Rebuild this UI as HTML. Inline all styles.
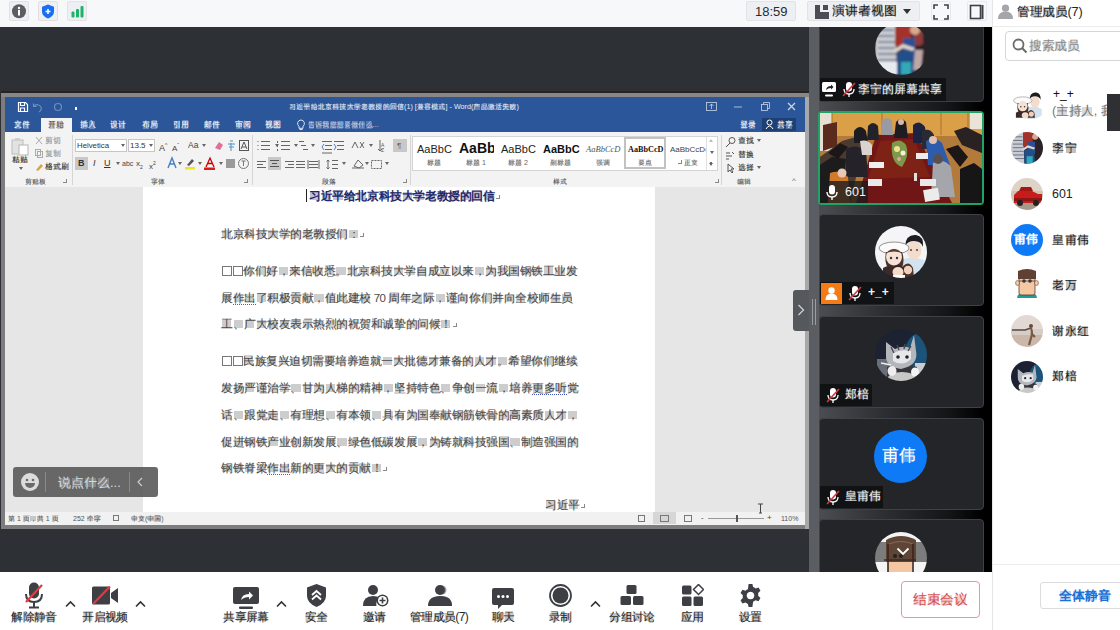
<!DOCTYPE html>
<html><head><meta charset="utf-8">
<style>
*{margin:0;padding:0;box-sizing:border-box}
html,body{width:1120px;height:630px;overflow:hidden;background:#2d3034;font-family:"Liberation Sans",sans-serif}
.a{position:absolute}
.n{white-space:nowrap}
.r8{font-size:8px;line-height:10px;color:#444;white-space:nowrap;position:absolute}
.r7{font-size:7px;line-height:9px;color:#666;white-space:nowrap;position:absolute}
.doc{position:absolute;left:221px;font-size:11.5px;line-height:14px;color:#4a4a4a;white-space:nowrap;letter-spacing:-0.46px}
.tile{position:absolute;left:819px;width:165px;height:92px;background:#232528;border:1px solid #3e4145;border-radius:4px;overflow:hidden}
.lbl{position:absolute;left:0;height:23px;background:#111214;color:#fff;font-size:12px;line-height:23px;white-space:nowrap}
.mem{position:absolute;left:1011px;width:32px;height:32px;border-radius:50%;overflow:hidden}
.mname{position:absolute;left:1052px;font-size:12.4px;line-height:16px;color:#222;white-space:nowrap}
.tb{position:absolute;top:610px;font-size:12px;letter-spacing:-0.6px;line-height:14px;color:#2a2a2a;white-space:nowrap;transform:translateX(-50%)}
.bx{display:inline-block;width:10px;height:10px;border:1px solid #777;margin:0 0.5px 0 0.5px;vertical-align:-1px}
i{font-style:normal}
.c{display:inline-block;position:relative;width:var(--cw,1em);text-align:center;letter-spacing:0;text-indent:0}
.c::before{content:"";position:absolute;left:10%;right:10%;top:18%;height:62%;background:currentColor;opacity:0.28}
.doc{--cw:11.54px}
.tb{--cw:11.4px}
.wv{border-bottom:1px dotted #e03030}
.dd{display:inline-block;width:0;height:0;border-left:2px solid transparent;border-right:2px solid transparent;border-top:3px solid #666;vertical-align:1px;margin:0 1px}
.du{display:inline-block;width:0;height:0;border-left:2px solid transparent;border-right:2px solid transparent;border-bottom:3px solid #bbb;vertical-align:1px}
.dl{display:inline-block;width:0;height:0;border-left:2.5px solid transparent;border-right:2.5px solid transparent;border-top:3px solid #666;vertical-align:0;box-shadow:0 -2px 0 -1px #666}
.dg{display:inline-block;width:4px;height:4px;border-right:1px solid #888;border-bottom:1px solid #888}
.ic{display:inline-block;width:6px;height:6px;border:1px solid #777}
.ret{display:inline-block;width:4px;height:4px;border-right:1px solid #888;border-bottom:1px solid #888;margin-left:1px;vertical-align:1px}
</style></head>
<body>
<div class="a" style="left:0;top:27px;width:809px;height:545px;background:#2d3034"></div>
<!-- WORD WINDOW -->
<div class="a" style="left:1px;top:93px;width:808px;height:436px;background:#7d7d7d"></div>
<div class="a" style="left:1px;top:85px;width:808px;height:2px;background:#2b313b"></div>
<div class="a" style="left:1px;top:87px;width:808px;height:4px;background:#352e2f"></div>
<div class="a" style="left:1px;top:91px;width:808px;height:2px;background:#1e252b"></div>
<div class="a" style="left:1px;top:93px;width:808px;height:4px;background:#8a8684"></div>
<div class="a" style="left:805px;top:97px;width:4px;height:432px;background:#a8a8a8"></div>
<div class="a" style="left:5px;top:97px;width:800px;height:35px;background:#2b579a"></div>
<svg class="a" style="left:17px;top:101px" width="70" height="12" viewBox="0 0 70 12">
 <g fill="none" stroke="#fff" stroke-width="1.2"><path d="M1.5 1.5 h7 l2 2 v7 h-9z"/><path d="M3.5 1.5 v3 h4 v-3"/><path d="M3.5 10.5 v-3.5 h4 v3.5"/></g>
 <g fill="none" stroke="#6f8dbd" stroke-width="1.2"><path d="M17 5 q4 -3 7 1 q1 3 -2 5"/><path d="M16.5 2.5 v3 h3"/><circle cx="41" cy="6" r="3.5"/></g>
 <rect x="58" y="6" width="2" height="3" fill="#fff"/>
</svg>
<div class="a n" style="left:289px;top:102px;color:#e8eef8;font-size:7.2px;line-height:10px"><i class="c">习</i><i class="c">近</i><i class="c">平</i><i class="c">给</i><i class="c">北</i><i class="c">京</i><i class="c">科</i><i class="c">技</i><i class="c">大</i><i class="c">学</i><i class="c">老</i><i class="c">教</i><i class="c">授</i><i class="c">的</i><i class="c">回</i><i class="c">信</i>(1) [<i class="c">兼</i><i class="c">容</i><i class="c">模</i><i class="c">式</i>] - Word(<i class="c">产</i><i class="c">品</i><i class="c">激</i><i class="c">活</i><i class="c">失</i><i class="c">败</i>)</div>
<svg class="a" style="left:701px;top:100px" width="100" height="14" viewBox="0 0 100 14">
 <g fill="none" stroke="#c9d4e6" stroke-width="0.8"><rect x="5.5" y="2.5" width="10" height="8"/><path d="M10.5 4 v5 M8.5 6 l2 -2 2 2"/><path d="M33 7 h8"/><rect x="60.5" y="4.5" width="6" height="6"/><path d="M62.5 4.5 v-2 h6 v6 h-2"/><path d="M87 3 l7 7 M94 3 l-7 7" stroke-width="1.3"/></g>
</svg>
<!-- tabs -->
<div class="a" style="left:41px;top:118px;width:31px;height:14px;background:#f3f3f3"></div>
<div class="a n" style="left:0;top:119px;font-size:8px;line-height:12px;color:#fff">
 <span class="a" style="left:14px"><i class="c">文</i><i class="c">件</i></span>
 <span class="a" style="left:48px;color:#4a4a4a"><i class="c">开</i><i class="c">始</i></span>
 <span class="a" style="left:80px"><i class="c">插</i><i class="c">入</i></span>
 <span class="a" style="left:110px"><i class="c">设</i><i class="c">计</i></span>
 <span class="a" style="left:142px"><i class="c">布</i><i class="c">局</i></span>
 <span class="a" style="left:173px"><i class="c">引</i><i class="c">用</i></span>
 <span class="a" style="left:204px"><i class="c">邮</i><i class="c">件</i></span>
 <span class="a" style="left:235px"><i class="c">审</i><i class="c">阅</i></span>
 <span class="a" style="left:265px"><i class="c">视</i><i class="c">图</i></span>
 <span class="a" style="left:308px;color:#c8d4e8;font-size:7.2px"><i class="c">告</i><i class="c">诉</i><i class="c">我</i><i class="c">您</i><i class="c">想</i><i class="c">要</i><i class="c">做</i><i class="c">什</i><i class="c">么</i>...</span>
 <span class="a" style="left:740px"><i class="c">登</i><i class="c">录</i></span>
</div>
<svg class="a" style="left:296px;top:119px" width="10" height="12" viewBox="0 0 10 12"><path d="M5 1 a3.5 3.5 0 0 1 2 6.3 v2 h-4 v-2 A3.5 3.5 0 0 1 5 1z M3.5 10.5 h3" fill="none" stroke="#dfe6f1" stroke-width="1"/></svg>
<div class="a" style="left:762px;top:118px;width:34px;height:13px;background:#1e3f74"></div>
<svg class="a" style="left:765px;top:119px" width="10" height="11" viewBox="0 0 10 11"><circle cx="4.5" cy="3.5" r="2.5" fill="none" stroke="#fff" stroke-width="1"/><path d="M1 10 q3.5 -6 7 0" fill="none" stroke="#fff" stroke-width="1"/></svg>
<span class="a n" style="left:777px;top:119px;font-size:8px;line-height:12px;color:#fff"><i class="c">共</i><i class="c">享</i></span>
<!-- ribbon -->
<div class="a" style="left:5px;top:132px;width:800px;height:55px;background:#f3f3f3"></div>
<!-- doc area -->
<div class="a" style="left:5px;top:187px;width:800px;height:325px;background:#e6e6e6"></div>
<div class="a" style="left:143px;top:187px;width:512px;height:325px;background:#fff"></div>
<!-- status bar -->
<div class="a" style="left:5px;top:512px;width:800px;height:13px;background:#f1f1f1"></div>
<!-- RIBBON CONTENT -->
<!-- clipboard -->
<svg class="a" style="left:11px;top:137px" width="20" height="19" viewBox="0 0 20 19"><rect x="1" y="3" width="11" height="14" fill="#e2e2e2" stroke="#bdbdbd"/><rect x="4" y="1" width="5" height="3" fill="#cfcfcf"/><rect x="8" y="8" width="9" height="10" fill="#fff" stroke="#b5b5b5"/></svg>
<span class="r8" style="left:12px;top:155px;color:#333"><i class="c">粘</i><i class="c">贴</i></span>
<span class="r7" style="left:18px;top:164px"><i class="dd"></i></span>
<svg class="a" style="left:34px;top:136px" width="10" height="36" viewBox="0 0 10 36"><g fill="none" stroke="#aaa" stroke-width="1"><path d="M2 1 l6 7 M8 1 l-6 7"/><rect x="1.5" y="13.5" width="5" height="6"/><rect x="3.5" y="15.5" width="5" height="6"/></g><path d="M2 34 l5 -6 2 2 -5 5z" fill="#d8a440"/></svg>
<span class="r8" style="left:45px;top:136px;color:#999"><i class="c">剪</i><i class="c">切</i></span>
<span class="r8" style="left:45px;top:149px;color:#999"><i class="c">复</i><i class="c">制</i></span>
<span class="r8" style="left:45px;top:162px;color:#333"><i class="c">格</i><i class="c">式</i><i class="c">刷</i></span>
<span class="r7" style="left:25px;top:177px;color:#555"><i class="c">剪</i><i class="c">贴</i><i class="c">板</i></span>
<span class="r7" style="left:63px;top:177px;color:#888;font-size:6px"><i class="dg"></i></span>
<div class="a" style="left:72px;top:135px;width:1px;height:50px;background:#d6d6d6"></div>
<!-- font group -->
<div class="a" style="left:75px;top:139px;width:52px;height:13px;background:#fff;border:1px solid #c6c6c6"></div>
<span class="r8" style="left:77px;top:141px;color:#333;font-size:7.8px">Helvetica</span>
<span class="r7" style="left:120px;top:141px;color:#555"><i class="dd"></i></span>
<div class="a" style="left:128px;top:139px;width:27px;height:13px;background:#fff;border:1px solid #c6c6c6"></div>
<span class="r8" style="left:130px;top:141px;color:#333;font-size:8px">13.5</span>
<span class="r7" style="left:148px;top:141px;color:#555"><i class="dd"></i></span>
<span class="r8" style="left:159px;top:140px;color:#444;font-size:9px">A<sup style="font-size:5px">^</sup></span>
<span class="r8" style="left:172px;top:140px;color:#444;font-size:8px">A<sup style="font-size:5px">ˇ</sup></span>
<span class="r8" style="left:188px;top:140px;color:#444;font-size:8.5px">Aa <i class="dd"></i></span>
<svg class="a" style="left:213px;top:139px" width="37" height="13" viewBox="0 0 37 13"><path d="M2 9 l4 -6 l4 3 l-3 5z" fill="#e0709a"/><path d="M17 2 h3 M15 5 h7 M16 8 h5 M18 4 v8" stroke="#4a90c8" stroke-width="1" fill="none"/><rect x="26.5" y="1.5" width="9" height="10" fill="none" stroke="#555"/><path d="M28 10 l3 -7 3 7 M29 8 h4" stroke="#555" fill="none"/></svg>
<div class="a" style="left:75px;top:157px;width:13px;height:13px;background:#c8c8c8"></div>
<div class="a n" style="left:78px;top:158px;font-size:9px;line-height:11px;color:#333;font-weight:bold">B</div>
<div class="a n" style="left:93px;top:158px;font-size:9px;line-height:11px;color:#333;font-style:italic">I</div>
<div class="a n" style="left:104px;top:158px;font-size:9px;line-height:11px;color:#333;text-decoration:underline">U</div>
<span class="r7" style="left:115px;top:159px"><i class="dd"></i></span>
<div class="a n" style="left:122px;top:158px;font-size:7px;line-height:11px;color:#444">abc</div>
<div class="a n" style="left:136px;top:158px;font-size:8px;line-height:11px;color:#444">x<sub style="font-size:5px">2</sub></div>
<div class="a n" style="left:149px;top:158px;font-size:8px;line-height:11px;color:#444">x<sup style="font-size:5px">2</sup></div>
<svg class="a" style="left:166px;top:156px" width="84" height="15" viewBox="0 0 84 15"><path d="M2 12 l4 -10 l4 10 M3.5 8 h5" stroke="#4a7fc0" stroke-width="1.4" fill="none"/><path d="M21 9 l5 -6 2 2 -5 5z" fill="#555"/><rect x="19" y="11" width="10" height="2.5" fill="#f5e31a"/><path d="M40 11 l4 -9 l4 9 M41.5 7.5 h5" stroke="#c00" stroke-width="1.3" fill="none"/><rect x="38" y="11.5" width="11" height="2.5" fill="#d51f1f"/><rect x="60" y="3" width="9" height="9" fill="#9a9a9a"/><circle cx="77.5" cy="7.5" r="5" fill="none" stroke="#777"/><path d="M75.5 5 h4 M77.5 5 v5" stroke="#777" fill="none"/></svg>
<span class="r7" style="left:177px;top:159px"><i class="dd"></i></span>
<span class="r7" style="left:197px;top:159px"><i class="dd"></i></span>
<span class="r7" style="left:218px;top:159px"><i class="dd"></i></span>
<span class="r7" style="left:151px;top:177px;color:#555"><i class="c">字</i><i class="c">体</i></span>
<span class="r7" style="left:244px;top:177px;color:#888;font-size:6px"><i class="dg"></i></span>
<div class="a" style="left:252px;top:135px;width:1px;height:50px;background:#d6d6d6"></div>
<!-- paragraph -->
<svg class="a" style="left:256px;top:138px" width="155" height="34" viewBox="0 0 155 34">
 <g stroke="#666" stroke-width="1" fill="none">
  <path d="M5 3.5 h9 M5 7.5 h9 M5 11.5 h9"/><path d="M1.5 3.5 h1 M1.5 7.5 h1 M1.5 11.5 h1"/>
  <path d="M25 3.5 h9 M25 7.5 h9 M25 11.5 h9"/><path d="M21.5 3 v2 M21.5 7 v2 M21.5 11 v2"/>
  <path d="M43 3.5 h5 M45 7.5 h5 M47 11.5 h5"/>
  <path d="M66 3.5 h10 M69 7.5 h7 M69 11.5 h7 M66 15 h10"/><path d="M68 6 l-2 3 2 3" stroke="#4a7fc0"/>
  <path d="M78 3.5 h10 M81 7.5 h7 M81 11.5 h7"/><path d="M78 6 l2 3 -2 3" stroke="#4a7fc0"/>
  <path d="M96 10 l3 -6 l3 6 M104 4 l4 6 M108 4 l-4 6"/>
  <path d="M124 2 v11 M122 11 l2 2 2 -2"/>
  <path d="M1 23.5 h9 M1 26.5 h6 M1 29.5 h9"/>
  <path d="M29 23.5 h9 M32 26.5 h6 M29 29.5 h9"/>
  <path d="M40 23.5 h9 M40 26.5 h9 M40 29.5 h9"/>
  <path d="M53 23.5 h9 M53 26.5 h9 M53 29.5 h9 M52 22 v9 M63 22 v9"/>
  <path d="M76 22.5 h6 M76 26.5 h6 M76 30.5 h6 M72 22 v9 M70.5 23.5 l1.5 -1.5 1.5 1.5 M70.5 29.5 l1.5 1.5 1.5 -1.5"/>
  <path d="M96 30 h12 M98 28 l4 -6 5 5 -4 3z"/>
  <rect x="115.5" y="22.5" width="10" height="8" stroke-dasharray="2 1"/>
 </g>
 <text x="125" y="9" font-size="5" fill="#555" font-family="Liberation Sans">A</text>
 <text x="125" y="14" font-size="5" fill="#555" font-family="Liberation Sans">Z</text>
</svg>
<div class="a" style="left:268px;top:157px;width:13px;height:13px;background:#c8c8c8"></div>
<svg class="a" style="left:270px;top:160px" width="10" height="8"><path d="M0 .5 h9 M2 3.5 h5 M0 6.5 h9" stroke="#555"/></svg>
<div class="a" style="left:393px;top:139px;width:14px;height:13px;background:#c8c8c8"></div>
<div class="a n" style="left:397px;top:140px;font-size:8px;line-height:11px;color:#666">¶</div>
<span class="r7" style="left:274px;top:141px"><i class="dd"></i></span>
<span class="r7" style="left:293px;top:141px"><i class="dd"></i></span>
<span class="r7" style="left:310px;top:141px"><i class="dd"></i></span>
<span class="r7" style="left:368px;top:141px"><i class="dd"></i></span>
<span class="r7" style="left:341px;top:159px"><i class="dd"></i></span>
<span class="r7" style="left:364px;top:159px"><i class="dd"></i></span>
<span class="r7" style="left:384px;top:159px"><i class="dd"></i></span>
<span class="r7" style="left:322px;top:177px;color:#555"><i class="c">段</i><i class="c">落</i></span>
<span class="r7" style="left:403px;top:177px;color:#888;font-size:6px"><i class="dg"></i></span>
<div class="a" style="left:410px;top:135px;width:1px;height:50px;background:#d6d6d6"></div>
<!-- styles -->
<div class="a" style="left:412px;top:136px;width:306px;height:35px;background:#fff;border:1px solid #d4d4d4"></div>
<div class="a" style="left:624px;top:137px;width:42px;height:32px;border:2px solid #c2c2c2"></div>
<div class="a n" style="left:417px;top:143px;font-size:11px;line-height:13px;color:#222">AaBbC</div>
<div class="a n" style="left:459px;top:140px;width:35px;overflow:hidden;font-size:14px;line-height:17px;color:#111;font-weight:bold">AaBb</div>
<div class="a n" style="left:501px;top:143px;font-size:11px;line-height:13px;color:#222">AaBbC</div>
<div class="a n" style="left:543px;top:143px;font-size:11px;line-height:13px;color:#111;font-weight:bold">AaBbC</div>
<div class="a n" style="left:586px;top:144px;font-size:8.5px;line-height:11px;color:#555;font-style:italic;font-family:'Liberation Serif',serif">AaBbCcD</div>
<div class="a n" style="left:628px;top:144px;font-size:8.2px;line-height:11px;color:#111;font-weight:bold;font-family:'Liberation Serif',serif">AaBbCcD</div>
<div class="a n" style="left:670px;top:144px;font-size:8px;line-height:11px;color:#444">AaBbCcDd</div>
<span class="r7" style="left:427px;top:158px;color:#666"><i class="c">标</i><i class="c">题</i></span>
<span class="r7" style="left:466px;top:158px;color:#666"><i class="c">标</i><i class="c">题</i> 1</span>
<span class="r7" style="left:508px;top:158px;color:#666"><i class="c">标</i><i class="c">题</i> 2</span>
<span class="r7" style="left:550px;top:158px;color:#666"><i class="c">副</i><i class="c">标</i><i class="c">题</i></span>
<span class="r7" style="left:596px;top:158px;color:#666"><i class="c">强</i><i class="c">调</i></span>
<span class="r7" style="left:638px;top:158px;color:#666"><i class="c">要</i><i class="c">点</i></span>
<span class="r7" style="left:677px;top:158px;color:#666"><i class="ret"></i> <i class="c">正</i><i class="c">文</i></span>
<div class="a" style="left:706px;top:137px;width:11px;height:33px;background:#fff;border-left:1px solid #e0e0e0"></div>
<span class="r7" style="left:709px;top:137px;color:#bbb;font-size:5px"><i class="du"></i></span>
<span class="r7" style="left:709px;top:149px;color:#555;font-size:5px"><i class="dd"></i></span>
<span class="r7" style="left:709px;top:160px;color:#555;font-size:6px"><i class="dl"></i></span>
<span class="r7" style="left:553px;top:177px;color:#555"><i class="c">样</i><i class="c">式</i></span>
<span class="r7" style="left:715px;top:177px;color:#888;font-size:6px"><i class="dg"></i></span>
<div class="a" style="left:721px;top:135px;width:1px;height:50px;background:#d6d6d6"></div>
<!-- editing -->
<svg class="a" style="left:725px;top:136px" width="12" height="38" viewBox="0 0 12 38"><g fill="none" stroke="#555" stroke-width="1"><circle cx="7" cy="4.5" r="3"/><path d="M5 7 l-4 4"/><path d="M1 17 h4 M1 20 h6 M7 16 l2 2 M1 23 h3"/><path d="M3 28 v8 l2 -2 l2 3 l1 -1 -2 -3 h3z"/></g></svg>
<span class="r8" style="left:738px;top:136px;color:#333"><i class="c">查</i><i class="c">找</i> <span style="font-size:6px;color:#666"><i class="dd"></i></span></span>
<span class="r8" style="left:738px;top:150px;color:#333"><i class="c">替</i><i class="c">换</i></span>
<span class="r8" style="left:738px;top:163px;color:#333"><i class="c">选</i><i class="c">择</i> <span style="font-size:6px;color:#666"><i class="dd"></i></span></span>
<span class="r7" style="left:737px;top:177px;color:#555"><i class="c">编</i><i class="c">辑</i></span>
<span class="r7" style="left:792px;top:176px;color:#666;font-size:8px">^</span>
<!-- DOCUMENT TEXT -->
<div class="a" style="left:306px;top:189px;width:1px;height:13px;background:#222"></div>
<div class="a n" style="left:309px;top:189px;font-size:11.6px;letter-spacing:-0.6px;line-height:14px;color:#1f2a6b;font-weight:bold"><i class="c">习</i><i class="c">近</i><i class="c">平</i><i class="c">给</i><i class="c">北</i><i class="c">京</i><i class="c">科</i><i class="c">技</i><i class="c">大</i><i class="c">学</i><i class="c">老</i><i class="c">教</i><i class="c">授</i><i class="c">的</i><i class="c">回</i><i class="c">信</i><span style="font-weight:normal;color:#888;font-size:7px"><i class="ret"></i></span></div>
<div class="doc" style="top:227px"><i class="c">北</i><i class="c">京</i><i class="c">科</i><i class="c">技</i><i class="c">大</i><i class="c">学</i><i class="c">的</i><i class="c">老</i><i class="c">教</i><i class="c">授</i><i class="c">们</i><i class="c">：</i><span style="color:#777;font-size:7px"><i class="ret"></i></span></div>
<div class="doc" style="top:264px"><span class="bx"></span><span class="bx"></span><i class="c">你</i><i class="c">们</i><i class="c">好</i><i class="c">，</i><i class="c">来</i><i class="c">信</i><i class="c">收</i><i class="c">悉</i><i class="c">。</i><i class="c">北</i><i class="c">京</i><i class="c">科</i><i class="c">技</i><i class="c">大</i><i class="c">学</i><i class="c">自</i><i class="c">成</i><i class="c">立</i><i class="c">以</i><i class="c">来</i><i class="c">，</i><i class="c">为</i><i class="c">我</i><i class="c">国</i><i class="c">钢</i><i class="c">铁</i><i class="c">工</i><i class="c">业</i><i class="c">发</i></div>
<div class="doc" style="top:291px"><i class="c">展</i><span class="wv" style="border-bottom-color:#e03030"><i class="c">作</i><i class="c">出</i></span><i class="c">了</i><i class="c">积</i><i class="c">极</i><i class="c">贡</i><i class="c">献</i><i class="c">，</i><i class="c">值</i><i class="c">此</i><i class="c">建</i><i class="c">校</i> 70 <i class="c">周</i><i class="c">年</i><i class="c">之</i><i class="c">际</i><i class="c">，</i><i class="c">谨</i><i class="c">向</i><i class="c">你</i><i class="c">们</i><i class="c">并</i><i class="c">向</i><i class="c">全</i><i class="c">校</i><i class="c">师</i><i class="c">生</i><i class="c">员</i></div>
<div class="doc" style="top:317px"><i class="c">工</i><i class="c">、</i><i class="c">广</i><i class="c">大</i><i class="c">校</i><i class="c">友</i><i class="c">表</i><i class="c">示</i><i class="c">热</i><i class="c">烈</i><i class="c">的</i><i class="c">祝</i><i class="c">贺</i><i class="c">和</i><i class="c">诚</i><i class="c">挚</i><i class="c">的</i><i class="c">问</i><i class="c">候</i><i class="c">！</i><span style="color:#777;font-size:7px"><i class="ret"></i></span></div>
<div class="doc" style="top:354px"><span class="bx"></span><span class="bx"></span><i class="c">民</i><i class="c">族</i><i class="c">复</i><i class="c">兴</i><i class="c">迫</i><i class="c">切</i><i class="c">需</i><i class="c">要</i><i class="c">培</i><i class="c">养</i><i class="c">造</i><i class="c">就</i><i class="c">一</i><i class="c">大</i><i class="c">批</i><i class="c">德</i><i class="c">才</i><i class="c">兼</i><i class="c">备</i><i class="c">的</i><i class="c">人</i><i class="c">才</i><i class="c">。</i><i class="c">希</i><i class="c">望</i><i class="c">你</i><i class="c">们</i><i class="c">继</i><i class="c">续</i></div>
<div class="doc" style="top:381px"><i class="c">发</i><i class="c">扬</i><i class="c">严</i><i class="c">谨</i><i class="c">治</i><i class="c">学</i><i class="c">、</i><i class="c">甘</i><i class="c">为</i><i class="c">人</i><i class="c">梯</i><i class="c">的</i><i class="c">精</i><i class="c">神</i><i class="c">，</i><i class="c">坚</i><i class="c">持</i><i class="c">特</i><i class="c">色</i><i class="c">、</i><i class="c">争</i><i class="c">创</i><i class="c">一</i><i class="c">流</i><i class="c">，</i><i class="c">培</i><i class="c">养</i><span class="wv" style="border-bottom-color:#4050c0"><i class="c">更</i><i class="c">多</i><i class="c">听</i></span><i class="c">党</i></div>
<div class="doc" style="top:408px"><i class="c">话</i><i class="c">、</i><i class="c">跟</i><i class="c">党</i><i class="c">走</i><i class="c">、</i><i class="c">有</i><i class="c">理</i><i class="c">想</i><i class="c">、</i><i class="c">有</i><i class="c">本</i><i class="c">领</i><i class="c">、</i><i class="c">具</i><i class="c">有</i><i class="c">为</i><i class="c">国</i><i class="c">奉</i><i class="c">献</i><i class="c">钢</i><i class="c">筋</i><i class="c">铁</i><i class="c">骨</i><i class="c">的</i><i class="c">高</i><i class="c">素</i><i class="c">质</i><i class="c">人</i><i class="c">才</i><i class="c">，</i></div>
<div class="doc" style="top:435px"><i class="c">促</i><i class="c">进</i><i class="c">钢</i><i class="c">铁</i><i class="c">产</i><i class="c">业</i><i class="c">创</i><i class="c">新</i><i class="c">发</i><i class="c">展</i><i class="c">、</i><i class="c">绿</i><i class="c">色</i><i class="c">低</i><i class="c">碳</i><i class="c">发</i><i class="c">展</i><i class="c">，</i><i class="c">为</i><i class="c">铸</i><i class="c">就</i><i class="c">科</i><i class="c">技</i><i class="c">强</i><i class="c">国</i><i class="c">、</i><i class="c">制</i><i class="c">造</i><i class="c">强</i><i class="c">国</i><i class="c">的</i></div>
<div class="doc" style="top:461px"><i class="c">钢</i><i class="c">铁</i><i class="c">脊</i><i class="c">梁</i><span class="wv" style="border-bottom-color:#e03030"><i class="c">作</i><i class="c">出</i></span><i class="c">新</i><i class="c">的</i><i class="c">更</i><i class="c">大</i><i class="c">的</i><i class="c">贡</i><i class="c">献</i><i class="c">！</i><span style="color:#777;font-size:7px"><i class="ret"></i></span></div>
<div class="doc" style="top:498px;left:545px"><i class="c">习</i><i class="c">近</i><i class="c">平</i><span style="color:#777;font-size:7px"><i class="ret"></i></span></div>
<!-- status bar text -->
<span class="r7" style="left:8px;top:514px;color:#555"><i class="c">第</i> 1 <i class="c">页</i><i class="c">，</i><i class="c">共</i> 1 <i class="c">页</i></span>
<span class="r7" style="left:73px;top:514px;color:#555">252 <i class="c">个</i><i class="c">字</i></span>
<span class="r7" style="left:113px;top:514px;color:#555"><i class="ic"></i></span>
<span class="r7" style="left:131px;top:514px;color:#555"><i class="c">中</i><i class="c">文</i>(<i class="c">中</i><i class="c">国</i>)</span>
<div class="a" style="left:653px;top:512px;width:23px;height:12px;background:#d6d6d6"></div>
<svg class="a" style="left:636px;top:514px" width="60" height="9" viewBox="0 0 60 9"><g fill="none" stroke="#777"><rect x="2.5" y="1.5" width="6" height="6"/><rect x="24.5" y="1.5" width="8" height="6"/><rect x="48.5" y="1.5" width="7" height="6"/></g></svg>
<div class="a" style="left:708px;top:518px;width:56px;height:1px;background:#999"></div>
<div class="a" style="left:736px;top:515px;width:2px;height:7px;background:#555"></div>
<span class="r7" style="left:701px;top:513px;color:#444;font-size:8px">-</span>
<span class="r7" style="left:767px;top:513px;color:#444;font-size:8px">+</span>
<span class="r7" style="left:781px;top:514px;color:#555">110%</span>
<!-- I-beam cursor -->
<svg class="a" style="left:757px;top:503px" width="7" height="11" viewBox="0 0 7 11"><path d="M1 1 h5 M3.5 1 v9 M2 10 h3" stroke="#444" stroke-width="1" fill="none"/></svg>
<!-- chat overlay -->
<div class="a" style="left:13px;top:467px;width:145px;height:30px;background:rgba(80,80,80,0.85);border-radius:3px"></div>
<svg class="a" style="left:20px;top:472px" width="20" height="20" viewBox="0 0 20 20"><circle cx="10" cy="10" r="9" fill="#dcdcdc"/><circle cx="7" cy="8" r="1.3" fill="#6a6a6a"/><circle cx="13" cy="8" r="1.3" fill="#6a6a6a"/><path d="M5 11 h10 a5 5 0 0 1 -10 0z" fill="#6a6a6a"/></svg>
<div class="a" style="left:45px;top:472px;width:1px;height:20px;background:#8a8a8a"></div>
<div class="a n" style="left:58px;top:475px;font-size:13px;line-height:15px;color:#d8d8d8"><i class="c">说</i><i class="c">点</i><i class="c">什</i><i class="c">么</i>...</div>
<div class="a" style="left:129px;top:472px;width:1px;height:20px;background:#8a8a8a"></div>
<svg class="a" style="left:136px;top:477px" width="8" height="10" viewBox="0 0 8 10"><path d="M6 1 l-4 4 4 4" stroke="#ccc" stroke-width="1.2" fill="none"/></svg>
<!-- VIDEO PANEL -->
<div class="a" style="left:809px;top:27px;width:10px;height:545px;background:#5a5d61"></div>
<div class="a" style="left:819px;top:27px;width:173px;height:545px;background:linear-gradient(90deg,#4a4d51 0%,#2e3034 35%,#141517 75%,#000 94%)"></div>
<div class="a" style="left:983px;top:27px;width:9px;height:545px;background:#000"></div>
<div class="a" style="left:812px;top:299px;width:1px;height:26px;background:#9a9da1"></div>
<div class="a" style="left:815px;top:299px;width:1px;height:26px;background:#9a9da1"></div>
<div class="a" style="left:793px;top:290px;width:16px;height:41px;background:#55585c;border-radius:3px 0 0 3px"></div>
<svg class="a" style="left:797px;top:304px" width="8" height="12" viewBox="0 0 8 12"><path d="M1.5 1 l5 5 -5 5" stroke="#d0d0d0" stroke-width="1.3" fill="none"/></svg>

<!-- tile1 -->
<div class="tile" style="top:9px;height:93px;border-color:#3a3d41"></div>
<div class="a" style="left:819px;top:27px;width:165px;height:1px;background:#232528"></div>
<svg class="a" style="left:875px;top:22px" width="53" height="53" viewBox="0 0 53 53">
 <defs><clipPath id="c1"><circle cx="26.5" cy="26.5" r="26.5"/></clipPath><filter id="bl1"><feGaussianBlur stdDeviation="0.8"/></filter></defs>
 <g clip-path="url(#c1)"><g filter="url(#bl1)">
  <rect width="53" height="53" fill="#3b2f3a"/>
  <path d="M0 0 h20 l2 53 h-22z" fill="#c9ccd3"/>
  <path d="M3 8 h16 M3 14 h16 M3 20 h17 M3 26 h17 M3 32 h18 M3 38 h18 M3 44 h19" stroke="#6a7080" stroke-width="1.6"/>
  <path d="M4 40 h18 v13 h-18z" fill="#e8ecf0"/>
  <path d="M20 0 h20 v24 h-20z" fill="#a3302c"/>
  <path d="M36 0 h17 v53 h-17z" fill="#2a2228"/>
  <path d="M38 6 q6 -4 10 2 v14 q-6 4 -10 0z" fill="#8a3a3a"/>
  <circle cx="40" cy="8" r="5" fill="#d9a88e"/>
  <path d="M28 16 h12 v20 h-12z" fill="#2e4f92"/>
  <path d="M18 28 l10 -6 l12 4 l-2 3 l-10 -3 l-8 5z" fill="#e0d4cc"/>
  <path d="M22 30 h16 l2 23 h-18z" fill="#23508a"/>
  <path d="M26 40 h10 v13 h-10z" fill="#30a8b8"/>
  <path d="M40 28 h8 l-2 20 h-8z" fill="#bda8a8"/>
 </g></g>
</svg>
<div class="a" style="left:820px;top:78px;width:126px;height:23px;background:#111214"></div>
<svg class="a" style="left:822px;top:82px" width="14" height="15" viewBox="0 0 14 15"><rect x="0" y="0" width="14" height="10" rx="1.5" fill="#fff"/><path d="M4 8 q0.5 -4 5 -4 v-1.5 l2.5 2.5 -2.5 2.5 v-1.5 q-3 0 -5 2z" fill="#222"/><rect x="3" y="12.5" width="8" height="2" rx="1" fill="#fff"/></svg>
<svg class="a" style="left:842px;top:82px" width="14" height="15" viewBox="0 0 14 15"><rect x="4" y="0" width="6" height="9.5" rx="3" fill="#fff"/><path d="M2 7 q0 5 5 5 q5 0 5 -5" stroke="#fff" stroke-width="1.3" fill="none"/><path d="M7 12 v3" stroke="#fff" stroke-width="1.3"/><path d="M1 14 l12 -13" stroke="#d9363e" stroke-width="1.6"/></svg>
<div class="a n" style="left:858px;top:82px;font-size:12px;line-height:15px;color:#f2f2f2"><i class="c">李</i><i class="c">宁</i><i class="c">的</i><i class="c">屏</i><i class="c">幕</i><i class="c">共</i><i class="c">享</i></div>

<!-- tile2 conference -->
<div class="a" style="left:818px;top:111px;width:166px;height:94px;border:2px solid #21a366;border-radius:4px;background:#111"></div>
<svg class="a" style="left:820px;top:113px" width="162" height="90" viewBox="0 0 162 90">
 <defs><filter id="bl2"><feGaussianBlur stdDeviation="0.6"/></filter></defs>
 <g filter="url(#bl2)">
 <rect width="162" height="90" fill="#b27a3a"/>
 <rect x="0" y="0" width="162" height="23" fill="#dba047"/>
 <rect x="0" y="0" width="12" height="38" fill="#e6dfd3"/>
 <rect x="150" y="0" width="12" height="16" fill="#e9e3d8"/>
 <path d="M12 0 v23 M62 0 v20 M121 0 v22 M148 0 v16" stroke="#a8722c" stroke-width="1"/>
 <path d="M3 12 l14 -3 v24 l-14 5z" fill="#5a2a1e"/>
 <path d="M0 44 L22 28 L36 24 L44 30 L30 90 H0z" fill="#4a3a30"/>
 <path d="M0 52 L12 44 L26 46 L20 90 H0z" fill="#1c1a1a"/>
 <path d="M8 40 l12 -10 l8 4 l-10 12z" fill="#1a1818"/>
 <path d="M134 18 l12 -4 l16 8 v18 l-20 -8z" fill="#2a2220"/>
 <path d="M126 36 l12 -4 l10 12 l-8 10z" fill="#1a1616"/>
 <path d="M140 56 l14 -6 l8 6 v34 h-22z" fill="#141212"/>
 <path d="M56 22 L96 20 L132 90 H36z" fill="#711812"/>
 <path d="M60 28 L94 26 L110 64 L48 66z" fill="#7e2018"/>
 <path d="M34 18 q6 -8 12 0 l2 12 h-14z" fill="#1e1d22"/>
 <path d="M48 13 q5 -6 10 0 l1 14 h-12z" fill="#24232a"/>
 <path d="M62 8 q5 -6 10 0 l1 14 h-12z" fill="#9a9aa4"/>
 <path d="M76 9 q5 -6 10 0 l2 16 h-14z" fill="#1f1e24"/>
 <circle cx="81" cy="9" r="3" fill="#d8b8a8"/>
 <path d="M93 12 q6 -6 12 2 l2 16 h-14z" fill="#1c2440"/>
 <path d="M102 18 q8 -4 12 4 l0 14 h-12z" fill="#2a2a34"/>
 <path d="M106 28 q8 -6 16 2 l8 22 h-22z" fill="#2d5cac"/>
 <circle cx="113" cy="27" r="4" fill="#e0c0b0"/>
 <path d="M113 50 q10 -6 18 4 l4 30 h-24z" fill="#a4a6ac"/>
 <circle cx="118" cy="46" r="5" fill="#5a5050"/>
 <path d="M26 36 q10 -6 20 2 l2 26 h-22z" fill="#25242a"/>
 <path d="M40 28 q8 -2 12 4 l0 10 h-10z" fill="#d9d4d0"/>
 <path d="M10 60 q10 -4 18 4 l2 26 h-22z" fill="#d07a2a"/>
 <circle cx="22" cy="60" r="4.5" fill="#eac8b4"/>
 <path d="M72 30 q8 -6 14 2 q4 10 -4 22 q-12 -4 -10 -24z" fill="#7b9a48"/>
 <circle cx="77" cy="36" r="3" fill="#f0e490"/><circle cx="83" cy="40" r="2.5" fill="#f4f0e0"/><circle cx="79" cy="46" r="2" fill="#e8a0a0"/>
 <rect x="49" y="49" width="15" height="6" fill="#f0f0f0"/>
 <rect x="96" y="40" width="12" height="6" fill="#ececec"/>
 <rect x="100" y="66" width="16" height="7" fill="#e8e8e8"/>
 <rect x="104" y="76" width="15" height="12" fill="#ececec" transform="rotate(-10 111 82)"/>
 <rect x="48" y="66" width="14" height="7" fill="#eaeaea"/>
 <rect x="94" y="60" width="3" height="8" fill="#e0e0e0"/>
 </g>
 <rect x="0" y="68" width="48" height="22" fill="rgba(28,28,30,0.8)"/>
</svg>
<svg class="a" style="left:826px;top:185px" width="12" height="15" viewBox="0 0 12 15"><rect x="3" y="0" width="6" height="9.5" rx="3" fill="#fff"/><path d="M1 7 q0 5 5 5 q5 0 5 -5" stroke="#fff" stroke-width="1.4" fill="none"/><path d="M6 12 v3" stroke="#fff" stroke-width="1.4"/></svg>
<div class="a n" style="left:845px;top:185px;font-size:12.5px;line-height:15px;color:#f4f4f4">601</div>

<!-- tile3 -->
<div class="tile" style="top:214px"></div>
<svg class="a" style="left:875px;top:226px" width="52" height="52" viewBox="0 0 52 52">
 <defs><clipPath id="c3"><circle cx="26" cy="26" r="26"/></clipPath><filter id="bl3"><feGaussianBlur stdDeviation="0.5"/></filter></defs>
 <g clip-path="url(#c3)"><g filter="url(#bl3)">
  <rect width="52" height="52" fill="#f5f5f7"/>
  <path d="M26 34 q13 -6 26 2 v16 h-26z" fill="#d2e2ee"/>
  <ellipse cx="39" cy="24" rx="7.5" ry="9.5" fill="#f3dccb"/>
  <path d="M30 20 q1 -12 11 -11 q8 1 7 12 q-2 -6 -9 -6 q-6 0 -9 5z" fill="#1e1e22"/>
  <circle cx="36" cy="24" r="0.9" fill="#333"/><circle cx="42" cy="24" r="0.9" fill="#333"/>
  <ellipse cx="19" cy="22" rx="15" ry="6" fill="#fbfbfb" stroke="#777" stroke-width="0.8"/>
  <path d="M11 26 q-2 10 2 16 h14 q3 -8 0 -16z" fill="#4a3028"/>
  <ellipse cx="19" cy="31" rx="8" ry="8.5" fill="#f6e2d5"/>
  <path d="M11 27 q8 -8 16 0 q-8 -3 -16 0z" fill="#5a3a30"/>
  <circle cx="16" cy="32" r="1.2" fill="#333"/><circle cx="22" cy="32" r="1.2" fill="#333"/>
  <path d="M8 42 q6 -4 12 0 v10 h-12z" fill="#3a2a2a"/>
  <path d="M28 40 q6 -6 10 2 l1 10 h-12z" fill="#4e3028"/>
  <circle cx="33" cy="44" r="4.2" fill="#f0d0bc"/>
  <path d="M17 42 q6 -6 12 0 v4 h-12z" fill="#3a2420"/>
  <ellipse cx="23" cy="46" rx="5.5" ry="5" fill="#f4dccb"/>
  <path d="M18 52 h12 v-3 h-12z" fill="#fff"/>
 </g></g>
</svg>
<div class="a" style="left:820px;top:282px;width:74px;height:22px;background:#111214"></div>
<div class="a" style="left:821px;top:283px;width:21px;height:21px;background:#f57c14"></div>
<svg class="a" style="left:824px;top:286px" width="15" height="15" viewBox="0 0 15 15"><circle cx="7.5" cy="4.5" r="3.2" fill="#fff"/><path d="M1.5 14 q0 -6.5 6 -6.5 q6 0 6 6.5z" fill="#fff"/></svg>
<svg class="a" style="left:848px;top:286px" width="14" height="15" viewBox="0 0 14 15"><rect x="4" y="0" width="6" height="9.5" rx="3" fill="#fff"/><path d="M2 7 q0 5 5 5 q5 0 5 -5" stroke="#fff" stroke-width="1.3" fill="none"/><path d="M7 12 v3" stroke="#fff" stroke-width="1.3"/><path d="M1 14 l12 -13" stroke="#d9363e" stroke-width="1.6"/></svg>
<div class="a n" style="left:868px;top:285px;font-size:12px;line-height:15px;color:#f2f2f2;font-weight:bold">+_+</div>

<!-- tile4 -->
<div class="tile" style="top:316px"></div>
<svg class="a" style="left:875px;top:329px" width="52" height="52" viewBox="0 0 52 52">
 <defs><clipPath id="c4"><circle cx="26" cy="26" r="26"/></clipPath><filter id="bl4"><feGaussianBlur stdDeviation="0.7"/></filter></defs>
 <g clip-path="url(#c4)"><g filter="url(#bl4)">
  <rect width="52" height="52" fill="#1d2330"/>
  <ellipse cx="46" cy="24" rx="16" ry="20" fill="#1c5378"/>
  <path d="M40 34 h12 v12 h-12z" fill="#c9cdd2"/>
  <path d="M2 30 h14 v20 h-14z" fill="#6a6e78"/>
  <path d="M12 38 q14 -6 30 0 v14 h-30z" fill="#34343a"/>
  <ellipse cx="27" cy="49" rx="14" ry="6" fill="#c8c8c6"/>
  <path d="M11 13 l9 7 q8 -4 15 -1 l4 -13 l2 16 q3 14 -15 18 q-16 -2 -15 -14z" fill="#b4b6bc"/>
  <path d="M18 24 q8 -4 18 -2 v8 q-8 8 -18 2z" fill="#e6e8ec"/>
  <path d="M16 18 l3 6 M22 16 l2 5 M30 15 l-1 5 M36 17 l-3 5" stroke="#4a4a50" stroke-width="1.4"/>
  <circle cx="23" cy="28" r="1.8" fill="#222"/><circle cx="32" cy="28" r="1.8" fill="#222"/>
  <path d="M6 34 l10 2" stroke="#f0f0f0" stroke-width="1.5"/>
  <ellipse cx="17" cy="42" rx="4.5" ry="5" fill="#eeeeee"/>
  <ellipse cx="40" cy="43" rx="4" ry="4.5" fill="#f4f4f4"/>
 </g></g>
</svg>
<div class="a" style="left:820px;top:384px;width:52px;height:22px;background:#111214"></div>
<svg class="a" style="left:826px;top:388px" width="14" height="15" viewBox="0 0 14 15"><rect x="4" y="0" width="6" height="9.5" rx="3" fill="#fff"/><path d="M2 7 q0 5 5 5 q5 0 5 -5" stroke="#fff" stroke-width="1.3" fill="none"/><path d="M7 12 v3" stroke="#fff" stroke-width="1.3"/><path d="M1 14 l12 -13" stroke="#d9363e" stroke-width="1.6"/></svg>
<div class="a n" style="left:845px;top:387px;font-size:12px;line-height:15px;color:#f2f2f2"><i class="c">郑</i><i class="c">棓</i></div>

<!-- tile5 -->
<div class="tile" style="top:418px"></div>
<div class="a" style="left:874px;top:430px;width:53px;height:53px;border-radius:50%;background:#0f7af6"></div>
<div class="a n" style="left:882px;top:446px;font-size:17px;line-height:20px;color:#fff"><i class="c">甫</i><i class="c">伟</i></div>
<div class="a" style="left:820px;top:486px;width:63px;height:22px;background:#111214"></div>
<svg class="a" style="left:826px;top:490px" width="14" height="15" viewBox="0 0 14 15"><rect x="4" y="0" width="6" height="9.5" rx="3" fill="#fff"/><path d="M2 7 q0 5 5 5 q5 0 5 -5" stroke="#fff" stroke-width="1.3" fill="none"/><path d="M7 12 v3" stroke="#fff" stroke-width="1.3"/><path d="M1 14 l12 -13" stroke="#d9363e" stroke-width="1.6"/></svg>
<div class="a n" style="left:845px;top:489px;font-size:12px;line-height:15px;color:#f2f2f2"><i class="c">皇</i><i class="c">甫</i><i class="c">伟</i></div>

<!-- tile6 -->
<div class="tile" style="top:519px;height:60px"></div>
<svg class="a" style="left:875px;top:532px" width="52" height="40" viewBox="0 0 52 40">
 <defs><clipPath id="c6"><circle cx="26" cy="26" r="26"/></clipPath><filter id="bl6"><feGaussianBlur stdDeviation="0.5"/></filter></defs>
 <g clip-path="url(#c6)"><g filter="url(#bl6)">
  <rect width="52" height="52" fill="#f4f4f4"/>
  <rect x="0" y="10" width="52" height="20" fill="#7c7c7c"/>
  <path d="M13 30 h24 v10 h-24z" fill="#f5c6a2"/>
  <path d="M11 8 q15 -8 30 0 v22 h-30z" fill="#5e4436"/>
  <path d="M14 12 q12 -5 24 0" stroke="#8a6a5a" stroke-width="1" fill="none"/>
  <circle cx="20" cy="24" r="2" fill="#222"/><circle cx="26" cy="24" r="2" fill="#222"/>
  <path d="M9 28 h32" stroke="#3a2a22" stroke-width="1.4"/>
  <path d="M13 12 v28 M38 12 v28" stroke="#3a2620" stroke-width="1.6"/>
 </g></g>
</svg>
<svg class="a" style="left:896px;top:547px" width="14" height="9" viewBox="0 0 14 9"><path d="M1.5 1.5 l5.5 5.5 5.5 -5.5" stroke="#fff" stroke-width="1.8" fill="none"/></svg>
<!-- TOP BAR -->
<div class="a" style="left:0;top:0;width:992px;height:27px;background:#f7f8fa"></div>
<div class="a" style="left:9px;top:1px;width:20px;height:20px;background:#eeeff2;border:1px solid #e1e2e6;border-radius:2px"></div>
<svg class="a" style="left:11px;top:4px" width="16" height="15" viewBox="0 0 16 15"><circle cx="8" cy="7.3" r="7" fill="#5c5d62"/><circle cx="8" cy="4" r="1.2" fill="#fff"/><rect x="7" y="6" width="2" height="5.5" fill="#fff"/></svg>
<div class="a" style="left:38px;top:1px;width:20px;height:20px;background:#eef0f4;border:1px solid #e6dfe0;border-radius:2px"></div>
<svg class="a" style="left:41px;top:4px" width="14" height="15" viewBox="0 0 14 15"><path d="M7 0.5 L13 2.8 V7.5 Q13 12 7 14.5 Q1 12 1 7.5 V2.8z" fill="#1a6ff0"/><path d="M7 5 v5 M4.5 7.5 h5" stroke="#fff" stroke-width="1.6"/></svg>
<div class="a" style="left:67px;top:1px;width:20px;height:20px;background:#eeeff2;border:1px solid #e6e2e4;border-radius:2px"></div>
<svg class="a" style="left:69px;top:5px" width="16" height="14" viewBox="0 0 16 14"><rect x="2.5" y="6.5" width="3" height="6" rx="1" fill="#1fb36a"/><rect x="7" y="4" width="3" height="8.5" rx="1" fill="#1fb36a"/><rect x="11.5" y="1" width="3" height="11.5" rx="1" fill="#1fb36a"/></svg>
<div class="a" style="left:746px;top:1px;width:50px;height:20px;background:#eeeff2;border:1px solid #e2e3e6;border-radius:2px"></div>
<div class="a n" style="left:755px;top:4px;font-size:13px;line-height:15px;color:#2a2a2a">18:59</div>
<div class="a" style="left:807px;top:1px;width:113px;height:20px;background:#eeeff2;border:1px solid #e2e3e6;border-radius:2px"></div>
<svg class="a" style="left:815px;top:5px" width="14" height="14" viewBox="0 0 14 14"><path d="M0 0 h5 v7 h9 v7 h-14z" fill="#4b4d55"/><rect x="8" y="0" width="5" height="5" fill="#4b4d55"/></svg>
<div class="a n" style="left:832px;top:3px;font-size:13px;line-height:15px;color:#222"><i class="c">演</i><i class="c">讲</i><i class="c">者</i><i class="c">视</i><i class="c">图</i></div>
<svg class="a" style="left:903px;top:9px" width="8" height="6" viewBox="0 0 8 6"><path d="M0 0 h8 l-4 5z" fill="#333"/></svg>
<div class="a" style="left:931px;top:1px;width:20px;height:20px;border:1px solid #e8e9ec;border-radius:2px"></div>
<svg class="a" style="left:933px;top:4px" width="16" height="16" viewBox="0 0 16 16"><path d="M1 5 V1 h4 M11 1 h4 v4 M15 11 v4 h-4 M5 15 H1 v-4" stroke="#3e4047" stroke-width="1.6" fill="none"/></svg>
<div class="a" style="left:967px;top:1px;width:20px;height:20px;border:1px solid #e8e9ec;border-radius:2px"></div>
<svg class="a" style="left:969px;top:4px" width="16" height="16" viewBox="0 0 16 16"><rect x="1.5" y="1.5" width="10" height="13" stroke="#3e4047" stroke-width="1.6" fill="none"/><rect x="12.5" y="1" width="2" height="14" fill="#3e4047"/></svg>
<!-- RIGHT PANEL -->
<div class="a" style="left:992px;top:0;width:128px;height:630px;background:#fff;border-left:1px solid #e6e6e6"></div>
<div class="a" style="left:993px;top:26px;width:127px;height:1px;background:#ececec"></div>
<svg class="a" style="left:997px;top:4px" width="17" height="15" viewBox="0 0 17 15"><circle cx="8.5" cy="4.2" r="3.6" fill="#a4a6aa"/><path d="M1 15 q0 -7.5 7.5 -7.5 q7.5 0 7.5 7.5z" fill="#a4a6aa"/></svg>
<div class="a n" style="left:1017px;top:4px;font-size:12.6px;line-height:16px;color:#222"><i class="c">管</i><i class="c">理</i><i class="c">成</i><i class="c">员</i>(7)</div>
<div class="a" style="left:1005px;top:31px;width:125px;height:30px;border:1px solid #d6d6d6;border-radius:4px;background:#fff"></div>
<svg class="a" style="left:1012px;top:38px" width="16" height="16" viewBox="0 0 16 16"><circle cx="6.5" cy="6.5" r="5" stroke="#6a6a6a" stroke-width="1.8" fill="none"/><path d="M10 10 l4.5 4.5" stroke="#6a6a6a" stroke-width="2"/></svg>
<div class="a n" style="left:1029px;top:38px;font-size:12.6px;line-height:16px;color:#888"><i class="c">搜</i><i class="c">索</i><i class="c">成</i><i class="c">员</i></div>

<!-- members -->
<svg class="a" style="left:1011px;top:87px" width="32" height="32" viewBox="0 0 52 52">
 <defs><filter id="mb1"><feGaussianBlur stdDeviation="0.6"/></filter></defs>
 <g filter="url(#mb1)">
  <path d="M26 34 q13 -6 24 2 v10 q-10 8 -24 6z" fill="#d2e2ee"/>
  <ellipse cx="39" cy="24" rx="7.5" ry="9.5" fill="#f3dccb"/>
  <path d="M30 20 q1 -12 11 -11 q8 1 7 12 q-2 -6 -9 -6 q-6 0 -9 5z" fill="#1e1e22"/>
  <ellipse cx="19" cy="22" rx="15" ry="6" fill="#fbfbfb" stroke="#777" stroke-width="0.8"/>
  <path d="M11 26 q-2 10 2 16 h14 q3 -8 0 -16z" fill="#4a3028"/>
  <ellipse cx="19" cy="31" rx="8" ry="8.5" fill="#f6e2d5"/>
  <circle cx="16" cy="32" r="1.2" fill="#333"/><circle cx="22" cy="32" r="1.2" fill="#333"/>
  <path d="M8 42 q6 -4 12 0 v8 h-12z" fill="#3a2a2a"/>
  <path d="M28 40 q6 -6 10 2 l1 8 h-12z" fill="#4e3028"/>
  <circle cx="33" cy="44" r="4.2" fill="#f0d0bc"/>
  <path d="M17 42 q6 -6 12 0 v4 h-12z" fill="#3a2420"/>
  <ellipse cx="23" cy="46" rx="5.5" ry="5" fill="#f4dccb"/>
 </g>
</svg>
<div class="a n" style="left:1053px;top:87px;font-size:12px;line-height:14px;color:#111">+_+</div>
<div class="a n" style="left:1052px;top:104px;font-size:12.5px;line-height:15px;color:#777">(<i class="c">主</i><i class="c">持</i><i class="c">人</i>, <i class="c">我</i>)</div>
<div class="a" style="left:1107px;top:94px;width:13px;height:37px;background:#2e3033"></div>

<svg class="a" style="left:1011px;top:132px" width="32" height="32" viewBox="0 0 53 53">
 <defs><clipPath id="mc2"><circle cx="26.5" cy="26.5" r="26.5"/></clipPath><filter id="mb2"><feGaussianBlur stdDeviation="0.8"/></filter></defs>
 <g clip-path="url(#mc2)"><g filter="url(#mb2)">
  <rect width="53" height="53" fill="#3b2f3a"/>
  <path d="M0 0 h20 l2 53 h-22z" fill="#c9ccd3"/>
  <path d="M3 8 h16 M3 14 h16 M3 20 h17 M3 26 h17 M3 32 h18 M3 38 h18 M3 44 h19" stroke="#6a7080" stroke-width="1.6"/>
  <path d="M20 0 h20 v24 h-20z" fill="#a3302c"/>
  <path d="M36 0 h17 v53 h-17z" fill="#2a2228"/>
  <circle cx="40" cy="8" r="5" fill="#d9a88e"/>
  <path d="M28 16 h12 v20 h-12z" fill="#2e4f92"/>
  <path d="M18 28 l10 -6 l12 4 l-2 3 l-10 -3 l-8 5z" fill="#e0d4cc"/>
  <path d="M22 30 h16 l2 23 h-18z" fill="#23508a"/>
  <path d="M26 40 h10 v13 h-10z" fill="#30a8b8"/>
 </g></g>
</svg>
<div class="a n mname" style="top:140px"><i class="c">李</i><i class="c">宁</i></div>

<svg class="a" style="left:1011px;top:178px" width="32" height="32" viewBox="0 0 32 32">
 <defs><clipPath id="mc3"><circle cx="16" cy="16" r="16"/></clipPath><filter id="mb3"><feGaussianBlur stdDeviation="0.5"/></filter></defs>
 <g clip-path="url(#mc3)"><g filter="url(#mb3)">
  <rect width="32" height="32" fill="#cfc3b4"/>
  <rect x="0" y="0" width="32" height="13" fill="#ddd3c6"/>
  <rect x="0" y="24" width="32" height="8" fill="#a89a8a"/>
  <path d="M3 17 l4 -4 h14 l6 3 h4 v9 h-28z" fill="#c61d1d"/>
  <path d="M8 13 l2 -4 h10 l2 4z" fill="#a51818"/>
  <rect x="3" y="20" width="28" height="3" fill="#8a1212"/>
  <circle cx="9" cy="25" r="3" fill="#222"/><circle cx="25" cy="25" r="3" fill="#222"/>
 </g></g>
</svg>
<div class="a n mname" style="top:186px">601</div>

<div class="a" style="left:1011px;top:224px;width:32px;height:32px;border-radius:50%;background:#0f7af6"></div>
<div class="a n" style="left:1014px;top:232px;font-size:12px;line-height:15px;color:#fff;font-weight:bold"><i class="c">甫</i><i class="c">伟</i></div>
<div class="a n mname" style="top:232px"><i class="c">皇</i><i class="c">甫</i><i class="c">伟</i></div>

<svg class="a" style="left:1011px;top:268px" width="32" height="32" viewBox="0 0 32 32">
 <defs><filter id="mb5"><feGaussianBlur stdDeviation="0.4"/></filter></defs>
 <g filter="url(#mb5)">
  <path d="M6 30 q0 -6 10 -6 q10 0 10 6z" fill="#1a9c9a"/>
  <rect x="8" y="6" width="16" height="21" rx="2" fill="#f3c8a2" stroke="#5a3a2a" stroke-width="0.8"/>
  <path d="M7 3 q9 -4 18 0 v8 h-18z" fill="#5e4030"/>
  <circle cx="13" cy="13" r="1.8" fill="#333"/><circle cx="19" cy="13" r="1.8" fill="#333"/>
  <path d="M8 13 h16" stroke="#444" stroke-width="0.8"/>
  <ellipse cx="6.5" cy="15" rx="2" ry="2.5" fill="#f3c8a2" stroke="#5a3a2a" stroke-width="0.5"/><ellipse cx="25.5" cy="15" rx="2" ry="2.5" fill="#f3c8a2" stroke="#5a3a2a" stroke-width="0.5"/>
 </g>
</svg>
<div class="a n mname" style="top:277px"><i class="c">老</i><i class="c">万</i></div>

<svg class="a" style="left:1011px;top:315px" width="32" height="32" viewBox="0 0 32 32">
 <defs><clipPath id="mc6"><circle cx="16" cy="16" r="16"/></clipPath><filter id="mb6"><feGaussianBlur stdDeviation="0.5"/></filter></defs>
 <g clip-path="url(#mc6)"><g filter="url(#mb6)">
  <rect width="32" height="32" fill="#d8ccc6"/>
  <rect x="0" y="0" width="32" height="14" fill="#e2d8d4"/>
  <rect x="0" y="20" width="32" height="12" fill="#cbb8aa"/>
  <path d="M1 15 h13 l6 -2" stroke="#5a4a40" stroke-width="1.4" fill="none"/>
  <circle cx="20" cy="11" r="2" fill="#6a4a38"/>
  <path d="M20 13 q2 6 0 10 l-2 7 M20 18 l4 4" stroke="#7a5a44" stroke-width="2.2" fill="none"/>
 </g></g>
</svg>
<div class="a n mname" style="top:323px"><i class="c">谢</i><i class="c">永</i><i class="c">红</i></div>

<svg class="a" style="left:1011px;top:361px" width="32" height="32" viewBox="0 0 52 52">
 <defs><clipPath id="mc7"><circle cx="26" cy="26" r="26"/></clipPath><filter id="mb7"><feGaussianBlur stdDeviation="0.8"/></filter></defs>
 <g clip-path="url(#mc7)"><g filter="url(#mb7)">
  <rect width="52" height="52" fill="#1d2330"/>
  <ellipse cx="46" cy="24" rx="16" ry="20" fill="#1c5378"/>
  <path d="M40 34 h12 v12 h-12z" fill="#c9cdd2"/>
  <path d="M12 38 q14 -6 30 0 v14 h-30z" fill="#34343a"/>
  <ellipse cx="27" cy="49" rx="14" ry="6" fill="#c8c8c6"/>
  <path d="M11 13 l9 7 q8 -4 15 -1 l4 -13 l2 16 q3 14 -15 18 q-16 -2 -15 -14z" fill="#b4b6bc"/>
  <path d="M18 24 q8 -4 18 -2 v8 q-8 8 -18 2z" fill="#e6e8ec"/>
  <circle cx="23" cy="28" r="1.8" fill="#222"/><circle cx="32" cy="28" r="1.8" fill="#222"/>
  <ellipse cx="17" cy="42" rx="4.5" ry="5" fill="#eeeeee"/>
  <ellipse cx="40" cy="43" rx="4" ry="4.5" fill="#f4f4f4"/>
 </g></g>
</svg>
<div class="a n mname" style="top:368px"><i class="c">郑</i><i class="c">棓</i></div>

<div class="a" style="left:993px;top:564px;width:127px;height:1px;background:#ececec"></div>
<div class="a" style="left:1040px;top:582px;width:90px;height:27px;border:1px solid #dcdcdc;border-radius:3px;background:#fff"></div>
<div class="a n" style="left:1059px;top:588px;font-size:13px;line-height:15px;color:#1c6fd6;font-weight:bold"><i class="c">全</i><i class="c">体</i><i class="c">静</i><i class="c">音</i></div>
<!-- BOTTOM TOOLBAR -->
<div class="a" style="left:0;top:572px;width:992px;height:58px;background:#fff"></div>
<!-- mute -->
<svg class="a" style="left:24px;top:582px" width="20" height="27" viewBox="0 0 20 27"><rect x="5" y="0.5" width="10" height="16" rx="5" fill="#3d3f44"/><path d="M2 12 q0 8 8 8 q8 0 8 -8" stroke="#3d3f44" stroke-width="2" fill="none"/><path d="M10 20 v5 M5 25.5 h10" stroke="#3d3f44" stroke-width="2"/><path d="M2 20 l16 -17" stroke="#e8383d" stroke-width="2.2"/></svg>
<div class="tb" style="left:34px"><i class="c">解</i><i class="c">除</i><i class="c">静</i><i class="c">音</i></div>
<svg class="a" style="left:65px;top:600px" width="11" height="8" viewBox="0 0 11 8"><path d="M1 6.5 l4.5 -4.5 4.5 4.5" stroke="#333" stroke-width="1.6" fill="none"/></svg>
<!-- video -->
<svg class="a" style="left:92px;top:586px" width="27" height="19" viewBox="0 0 27 19"><rect x="0" y="0.5" width="18" height="18" rx="1.5" fill="#3d3f44"/><path d="M19 7 l7 -5 v15 l-7 -5z" fill="#3d3f44"/><path d="M1 18 l17 -17.5" stroke="#e8383d" stroke-width="2.2"/></svg>
<div class="tb" style="left:105px"><i class="c">开</i><i class="c">启</i><i class="c">视</i><i class="c">频</i></div>
<svg class="a" style="left:135px;top:600px" width="11" height="8" viewBox="0 0 11 8"><path d="M1 6.5 l4.5 -4.5 4.5 4.5" stroke="#333" stroke-width="1.6" fill="none"/></svg>
<!-- share -->
<svg class="a" style="left:233px;top:587px" width="26" height="22" viewBox="0 0 26 22"><rect x="0" y="0" width="26" height="17" rx="2" fill="#3d3f44"/><path d="M8 13 q1 -6 8 -6 v-2.5 l4 4 -4 4 v-2.5 q-5 0 -8 3z" fill="#fff"/><rect x="6" y="19.5" width="14" height="2.5" rx="1" fill="#3d3f44"/></svg>
<div class="tb" style="left:246px"><i class="c">共</i><i class="c">享</i><i class="c">屏</i><i class="c">幕</i></div>
<svg class="a" style="left:276px;top:600px" width="11" height="8" viewBox="0 0 11 8"><path d="M1 6.5 l4.5 -4.5 4.5 4.5" stroke="#333" stroke-width="1.6" fill="none"/></svg>
<!-- security -->
<svg class="a" style="left:306px;top:584px" width="21" height="23" viewBox="0 0 21 23"><path d="M10.5 0 L20 3.5 V12 Q20 19 10.5 23 Q1 19 1 12 V3.5z" fill="#3d3f44"/><path d="M6 11 l4.5 -4 4.5 4 M6 15.5 l4.5 -4 4.5 4" stroke="#fff" stroke-width="1.8" fill="none"/></svg>
<div class="tb" style="left:316px"><i class="c">安</i><i class="c">全</i></div>
<!-- invite -->
<svg class="a" style="left:363px;top:585px" width="26" height="22" viewBox="0 0 26 22"><circle cx="10" cy="5" r="5" fill="#3d3f44"/><path d="M0 21 q0 -10 10 -10 q4 0 6.5 2 q-4 3 -3 8z" fill="#3d3f44"/><circle cx="19.5" cy="15.5" r="6" fill="#3d3f44"/><circle cx="19.5" cy="15.5" r="4.5" fill="#fff"/><path d="M19.5 12.5 v6 M16.5 15.5 h6" stroke="#3d3f44" stroke-width="1.6"/></svg>
<div class="tb" style="left:374px"><i class="c">邀</i><i class="c">请</i></div>
<!-- members -->
<svg class="a" style="left:428px;top:585px" width="26" height="21" viewBox="0 0 26 21"><circle cx="14" cy="5" r="4.5" fill="#9a9ca0"/><path d="M4 21 q0 -10 10 -10 q10 0 10 10z" fill="#9a9ca0"/><circle cx="12" cy="5" r="5" fill="#3d3f44"/><path d="M0 21 q0 -10 12 -10 q12 0 12 10z" fill="#3d3f44"/></svg>
<div class="tb" style="left:439px"><i class="c">管</i><i class="c">理</i><i class="c">成</i><i class="c">员</i>(7)</div>
<!-- chat -->
<svg class="a" style="left:492px;top:588px" width="22" height="21" viewBox="0 0 22 21"><path d="M2 0 h18 a2 2 0 0 1 2 2 v13 a2 2 0 0 1 -2 2 h-10 l-4 4 v-4 h-4 a2 2 0 0 1 -2 -2 v-13 a2 2 0 0 1 2 -2z" fill="#3d3f44"/><circle cx="6.5" cy="8.5" r="1.5" fill="#fff"/><circle cx="11" cy="8.5" r="1.5" fill="#fff"/><circle cx="15.5" cy="8.5" r="1.5" fill="#fff"/></svg>
<div class="tb" style="left:503px"><i class="c">聊</i><i class="c">天</i></div>
<!-- record -->
<svg class="a" style="left:548px;top:584px" width="25" height="23" viewBox="0 0 25 23"><circle cx="12.5" cy="11.5" r="10.5" stroke="#3d3f44" stroke-width="1.8" fill="none"/><circle cx="12.5" cy="11.5" r="8" fill="#3d3f44"/></svg>
<div class="tb" style="left:560px"><i class="c">录</i><i class="c">制</i></div>
<svg class="a" style="left:590px;top:600px" width="11" height="8" viewBox="0 0 11 8"><path d="M1 6.5 l4.5 -4.5 4.5 4.5" stroke="#333" stroke-width="1.6" fill="none"/></svg>
<!-- breakout -->
<svg class="a" style="left:620px;top:585px" width="24" height="20" viewBox="0 0 24 20"><rect x="6.5" y="0" width="10" height="9" rx="1.5" fill="#3d3f44"/><rect x="0.5" y="11" width="10.5" height="9" rx="1.5" fill="#3d3f44"/><rect x="13" y="11" width="10.5" height="9" rx="1.5" fill="#3d3f44"/></svg>
<div class="tb" style="left:632px"><i class="c">分</i><i class="c">组</i><i class="c">讨</i><i class="c">论</i></div>
<!-- apps -->
<svg class="a" style="left:682px;top:584px" width="22" height="22" viewBox="0 0 22 22"><rect x="0" y="1.5" width="9.5" height="9" rx="1.5" fill="#3d3f44"/><path d="M16.5 0.5 l5 5 -5 5 -5 -5z" stroke="#3d3f44" stroke-width="1.5" fill="none"/><rect x="0" y="12.5" width="9.5" height="9.5" rx="1.5" fill="#3d3f44"/><rect x="11.5" y="12.5" width="9.5" height="9.5" rx="1.5" fill="#3d3f44"/></svg>
<div class="tb" style="left:692px"><i class="c">应</i><i class="c">用</i></div>
<!-- settings -->
<svg class="a" style="left:739px;top:584px" width="23" height="23" viewBox="0 0 24 24"><path fill="#3d3f44" fill-rule="evenodd" d="M10 0 h4 l0.7 3.2 a9 9 0 0 1 2.6 1.5 l3.1 -1 2 3.4 -2.4 2.2 a9 9 0 0 1 0 3 l2.4 2.2 -2 3.4 -3.1 -1 a9 9 0 0 1 -2.6 1.5 L14 24 h-4 l-0.7 -3.2 a9 9 0 0 1 -2.6 -1.5 l-3.1 1 -2 -3.4 2.4 -2.2 a9 9 0 0 1 0 -3 L1.6 9.5 l2 -3.4 3.1 1 a9 9 0 0 1 2.6 -1.5z M12 8 a4 4 0 1 0 0.01 0z"/></svg>
<div class="tb" style="left:750px"><i class="c">设</i><i class="c">置</i></div>
<!-- end meeting -->
<div class="a" style="left:901px;top:581px;width:79px;height:37px;border:1px solid #e39a9a;border-radius:4px;background:#fff"></div>
<div class="a n" style="left:913px;top:592px;font-size:13.5px;line-height:16px;color:#d45454"><i class="c">结</i><i class="c">束</i><i class="c">会</i><i class="c">议</i></div>
</body></html>
